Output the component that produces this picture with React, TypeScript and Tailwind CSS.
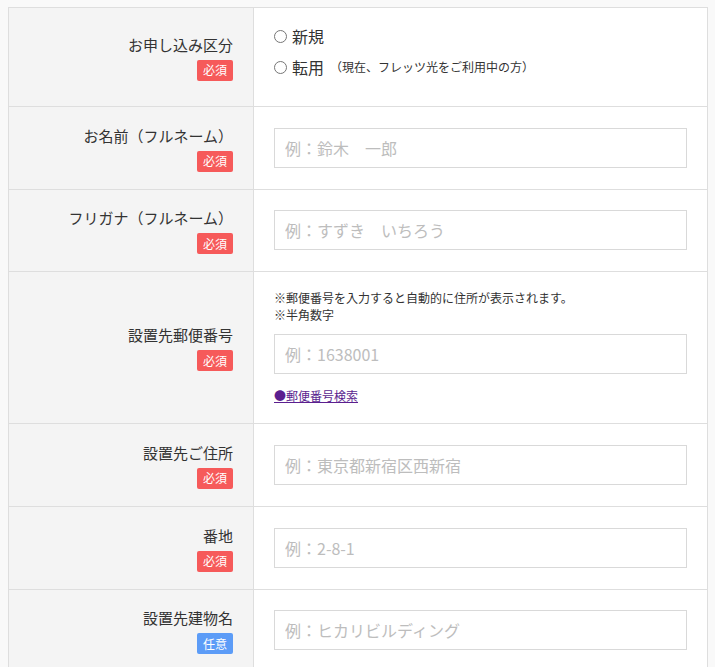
const font = { fontFamily: '"Noto Sans CJK JP", "Noto Sans", sans-serif' };

type Row = {
  label: string;
  required: boolean;
  placeholder: string;
  pad: string;
};

const textRows: Row[] = [
  { label: "お名前（フルネーム）", required: true, placeholder: "例：鈴木　一郎", pad: "py-[21px]" },
  { label: "フリガナ（フルネーム）", required: true, placeholder: "例：すずき　いちろう", pad: "pt-5 pb-[21px]" },
];

const addressRows: Row[] = [
  { label: "設置先ご住所", required: true, placeholder: "例：東京都新宿区西新宿", pad: "py-[21px]" },
  { label: "番地", required: true, placeholder: "例：2-8-1", pad: "py-[21px]" },
  { label: "設置先建物名", required: false, placeholder: "例：ヒカリビルディング", pad: "pt-5 pb-[21px]" },
];

function Badge({ required }: { required: boolean }) {
  return required ? (
    <span className="mt-1 inline-flex h-[21px] items-center rounded-[2px] bg-[#f65a5a] px-1.5 text-[12px] leading-none text-white">
      必須
    </span>
  ) : (
    <span className="mt-1 inline-flex h-[21px] items-center rounded-[2px] bg-[#5c9cf7] px-1.5 text-[12px] leading-none text-white">
      任意
    </span>
  );
}

function Label({ text, required }: { text: string; required: boolean }) {
  return (
    <div className="flex w-[245px] shrink-0 flex-col items-end justify-center border-r border-[#dedede] bg-[#f4f4f4] pr-5">
      <p className="text-[15px] leading-[22px] text-[#333]">{text}</p>
      <Badge required={required} />
    </div>
  );
}

function TextInput({ placeholder }: { placeholder: string }) {
  return (
    <input
      type="text"
      placeholder={placeholder}
      className="block h-10 w-full border border-[#d9d9d9] bg-white px-[10px] text-[16px] text-[#333] outline-none placeholder:text-[#bdbdbd]"
      style={font}
    />
  );
}

function Radio({ label, note }: { label: string; note?: string }) {
  return (
    <label className="flex h-6 items-center">
      <span className="h-[13px] w-[13px] rounded-full border border-[#767676] bg-white" />
      <span className="ml-[5px] text-[16px] text-[#333]">{label}</span>
      {note && <span className="ml-[6px] text-[12px] text-[#333]">{note}</span>}
    </label>
  );
}

function InputRow({ row, last }: { row: Row; last?: boolean }) {
  return (
    <div className={`flex ${last ? "" : "border-b border-[#dedede]"}`}>
      <Label text={row.label} required={row.required} />
      <div className={`flex-1 px-5 ${row.pad}`}>
        <TextInput placeholder={row.placeholder} />
      </div>
    </div>
  );
}

export default function App() {
  return (
    <div className="min-h-screen bg-[#f9f9f9] pl-2 pt-[7px]" style={font}>
      <div className="w-[700px] border border-[#dedede] bg-white">
        <div className="flex border-b border-[#dedede]">
          <Label text="お申し込み区分" required />
          <div className="flex flex-1 flex-col gap-[7px] px-5 pb-[27px] pt-4">
            <Radio label="新規" />
            <Radio label="転用" note="（現在、フレッツ光をご利用中の方）" />
          </div>
        </div>

        {textRows.map((row) => (
          <InputRow key={row.label} row={row} />
        ))}

        <div className="flex border-b border-[#dedede]">
          <Label text="設置先郵便番号" required />
          <div className="flex-1 px-5 pb-[19px] pt-[17px]">
            <p className="text-[12px] leading-[17px] text-[#333]">
              ※郵便番号を入力すると自動的に住所が表示されます。
              <br />
              ※半角数字
            </p>
            <div className="mt-[11px]">
              <TextInput placeholder="例：1638001" />
            </div>
            <a href="#zip" className="mt-[13px] block text-[12px] leading-[17px] text-[#5b1f8f] underline">
              ●郵便番号検索
            </a>
          </div>
        </div>

        {addressRows.map((row, i) => (
          <InputRow key={row.label} row={row} last={i === addressRows.length - 1} />
        ))}
      </div>
    </div>
  );
}
